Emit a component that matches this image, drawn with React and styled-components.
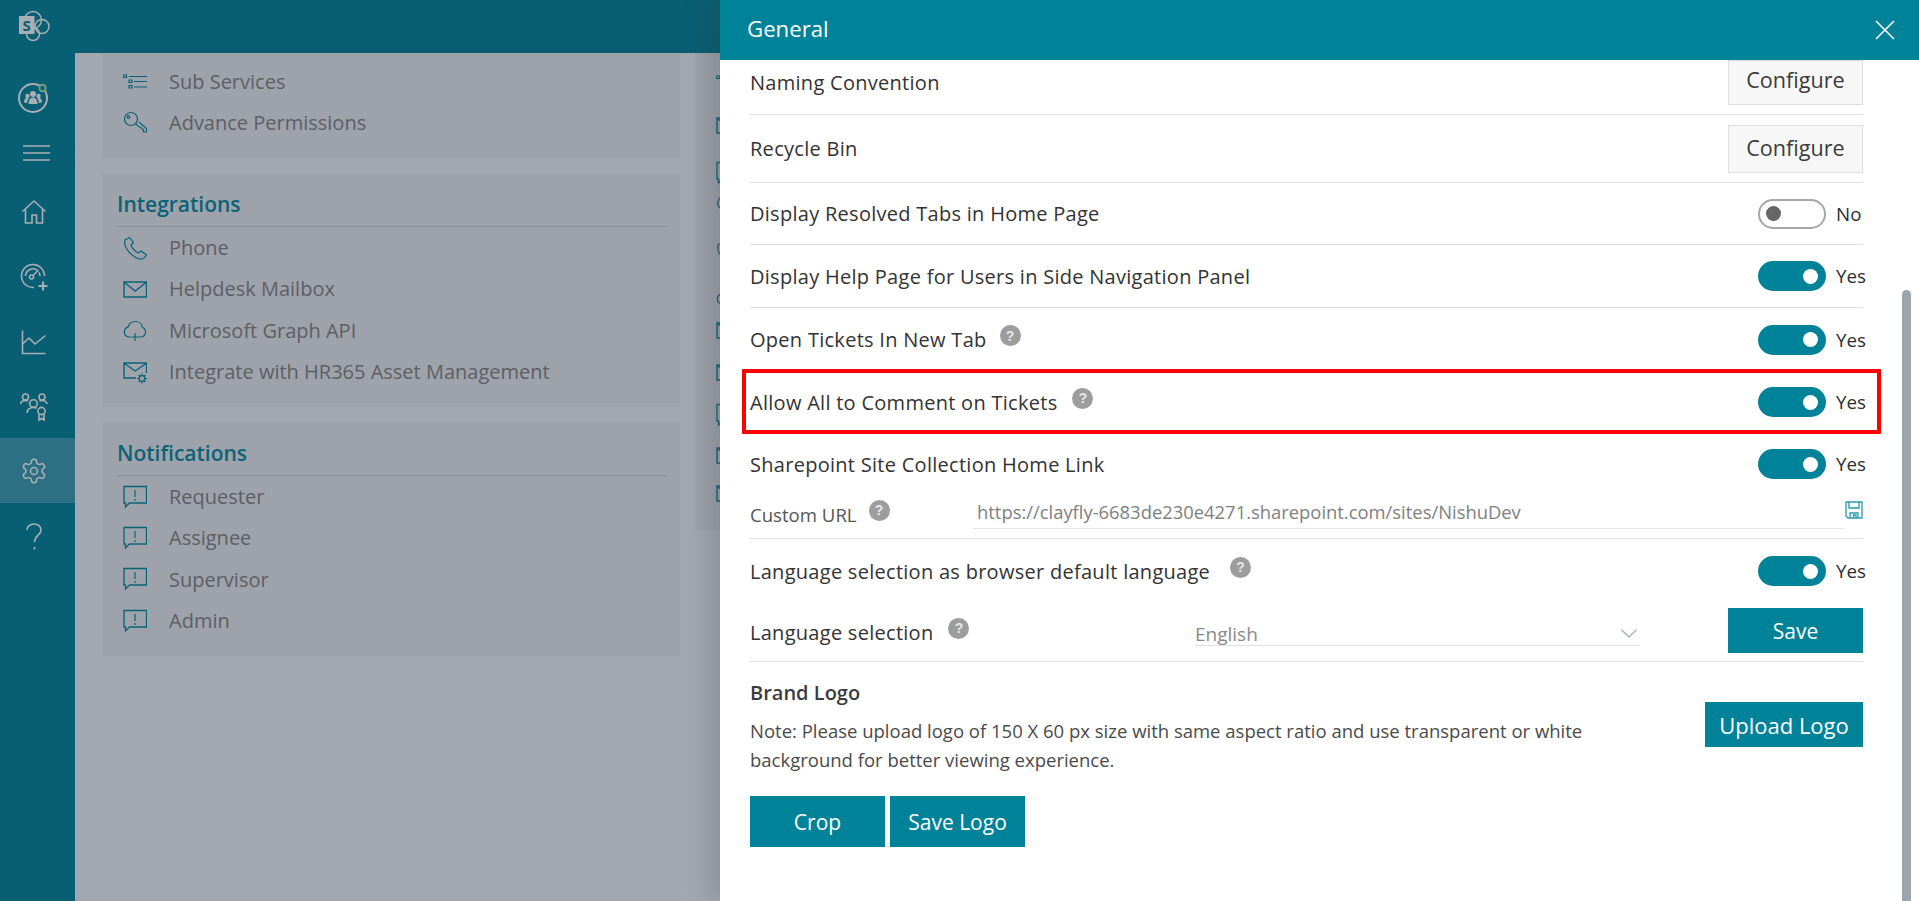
import React from "react";
import styled, { createGlobalStyle } from "styled-components";

const GlobalStyle = createGlobalStyle`
  html, body { margin: 0; padding: 0; height: 100%; overflow: hidden; }
  body { font-family: "Open Sans", "Noto Sans", sans-serif; }
`;

const Page = styled.div`
  position: relative;
  display: flex;
  width: 1919px;
  height: 901px;
  overflow: hidden;
  background: #a3a8b0;
`;

const Sidebar = styled.nav`
  width: 75px;
  flex: none;
  background: #085e72;
  display: flex;
  flex-direction: column;
`;

const SideItem = styled.div`
  height: ${(p) => p.$h}px;
  box-sizing: border-box;
  padding: 0 8px ${(p) => p.$pb || 0}px ${(p) => p.$shift || 0}px;
  display: flex;
  align-items: center;
  justify-content: center;
  color: #a9aeb5;
  background: ${(p) => (p.$active ? "#2d6f83" : "transparent")};
`;

const Main = styled.div`
  flex: 1;
  min-width: 0;
  display: flex;
  flex-direction: column;
`;

const TopBar = styled.div`
  height: 53px;
  flex: none;
  background: #085e72;
`;

const Columns = styled.div`
  flex: 1;
  display: flex;
  gap: 15px;
  padding-left: 27px;
`;

const Column = styled.div`
  width: 578px;
  flex: none;
  display: flex;
  flex-direction: column;
  gap: 15px;
`;

const Card = styled.section`
  background: #9ea2aa;
  padding: ${(p) => p.$pt}px 13px 0 15px;
  height: ${(p) => p.$h}px;
  box-sizing: border-box;
`;

const CardTitle = styled.h3`
  margin: 0;
  height: 38px;
  box-sizing: border-box;
  font-size: 21px;
  line-height: 31px;
  font-weight: 600;
  color: #0b6378;
  border-bottom: 1px solid #8d9099;
  padding-left: 0;
`;

const NavRow = styled.div`
  height: 41.3px;
  display: flex;
  align-items: center;
  gap: 22px;
  padding-left: 6px;
  font-size: 20px;
  color: #5c5f66;
  white-space: nowrap;
  svg { flex: none; }
`;

const PeekCard = styled.section`
  width: 100px;
  height: 477px;
  box-sizing: border-box;
  background: #9ea2aa;
  padding-left: 21px;
  display: flex;
  flex-direction: column;
`;

const PeekIcon = styled.div`
  height: 24px;
  margin-top: ${(p) => p.$mt}px;
`;

const PanelLayer = styled.div`
  position: absolute;
  top: 0;
  bottom: 0;
  left: 720px;
  width: 1199px;
  background: #fff;
  box-shadow: -10px 0 24px rgba(60, 64, 72, 0.24);
  display: flex;
  flex-direction: column;
`;

const PanelHeader = styled.header`
  height: 60px;
  flex: none;
  box-sizing: border-box;
  background: #008299;
  color: #fff;
  display: flex;
  align-items: center;
  justify-content: space-between;
  padding: 0 24px 4px 27px;
  font-size: 22.2px;
  svg { display: block; margin-top: 4px; }
`;

const PanelBody = styled.div`
  flex: 1;
  position: relative;
  padding: 0 56px 0 30px;
  overflow: hidden;
`;

const ScrollThumb = styled.div`
  position: absolute;
  right: 8px;
  top: 230px;
  bottom: 0;
  width: 9px;
  border-radius: 5px 5px 0 0;
  background: #9aa5ad;
`;

const Row = styled.div`
  height: ${(p) => p.$h}px;
  padding-bottom: ${(p) => p.$pb || 0}px;
  display: flex;
  align-items: center;
  justify-content: space-between;
  box-sizing: border-box;
  border-bottom: ${(p) => (p.$line ? "1px solid #e0e0e0" : "none")};
  font-size: 20px;
  letter-spacing: 0.28px;
  color: #333;
`;

const LabelWrap = styled.div`
  display: flex;
  align-items: center;
  gap: ${(p) => p.$gap || 14}px;
`;

const Help = styled.span`
  width: 21px;
  height: 21px;
  border-radius: 50%;
  background: #9d9d9d;
  color: #e8e8e8;
  font-size: 14px;
  letter-spacing: 0;
  font-weight: 700;
  display: inline-flex;
  align-items: center;
  justify-content: center;
  margin-top: -8px;
  font-family: "Liberation Sans", sans-serif;
`;

const ConfigureBtn = styled.button`
  width: 135px;
  height: ${(p) => p.$h}px;
  border: 1px solid #dedede;
  background: #f7f7f7;
  color: #3b3b3b;
  font: inherit;
  font-size: 21.6px;
  letter-spacing: 0;
  padding: 0 0 ${(p) => p.$pb || 0}px;
`;

const SwitchBox = styled.div`
  display: flex;
  align-items: center;
  gap: 10px;
  width: 107px;
  margin-right: -2px;
  font-size: 18.8px;
  letter-spacing: 0;
  color: #2e2e2e;
`;

const Track = styled.span`
  width: 68px;
  height: 30px;
  box-sizing: border-box;
  border-radius: 15px;
  flex: none;
  display: flex;
  align-items: center;
  padding: 0 ${(p) => (p.$on ? 8 : 6)}px;
  justify-content: ${(p) => (p.$on ? "flex-end" : "flex-start")};
  background: ${(p) => (p.$on ? "#008299" : "#fff")};
  border: ${(p) => (p.$on ? "none" : "2px solid #a6a6a6")};
`;

const Thumb = styled.span`
  width: 15px;
  height: 15px;
  border-radius: 50%;
  background: ${(p) => (p.$on ? "#fff" : "#666")};
`;

const UrlRow = styled.div`
  height: 44px;
  box-sizing: border-box;
  display: flex;
  align-items: flex-start;
  border-bottom: 1px solid #e0e0e0;
`;

const UrlLabel = styled.div`
  width: 223px;
  height: 38px;
  flex: none;
  display: flex;
  align-items: center;
  gap: 12px;
  font-size: 18.6px;
  color: #555;
`;

const UrlField = styled.div`
  flex: 1;
  height: 34px;
  box-sizing: border-box;
  border-bottom: 1px solid #e4e4e4;
  display: flex;
  align-items: center;
  padding-left: 4px;
  font-size: 18.4px;
  color: #808080;
`;

const SaveIconWrap = styled.div`
  margin: 6px 0 0 1px;
  line-height: 0;
`;

const SelectCluster = styled.div`
  display: flex;
  align-items: flex-start;
  gap: 88px;
  margin-bottom: 3px;
`;

const SelectField = styled.div`
  width: 445px;
  height: 30px;
  margin-top: 8px;
  padding: 6px 3px 0 0;
  border-bottom: 1px solid #e0e0e0;
  display: flex;
  align-items: center;
  justify-content: space-between;
  box-sizing: border-box;
  font-size: 19px;
  letter-spacing: 0;
  color: #888;
`;

const PrimaryBtn = styled.button`
  height: ${(p) => p.$h || 45}px;
  width: ${(p) => p.$w}px;
  border: none;
  padding: 0;
  background: #008299;
  color: #fff;
  font: inherit;
  font-size: 21px;
  letter-spacing: 0;
`;

const UploadBtn = styled(PrimaryBtn)`
  margin-top: 23px;
  font-size: 22px;
`;

const BrandBlock = styled.div`
  display: flex;
  justify-content: space-between;
  align-items: flex-start;
  padding-top: 17px;
`;

const BrandLeft = styled.div`
  width: 950px;
`;

const BrandTitle = styled.div`
  font-size: 20px;
  font-weight: 600;
  color: #3b3b3b;
  line-height: 28px;
`;

const Note = styled.p`
  margin: 9px 0 0;
  font-size: 18.5px;
  line-height: 29px;
  color: #4a4a4a;
`;

const BrandButtons = styled.div`
  display: flex;
  gap: 5px;
  margin-top: 22px;
`;

const Highlight = styled.div`
  position: absolute;
  left: 22px;
  top: 309px;
  width: 1139px;
  height: 65px;
  box-sizing: border-box;
  border: 4px solid #ff0000;
  border-radius: 1px;
  pointer-events: none;
`;

const stroke = { fill: "none", stroke: "currentColor", strokeWidth: 1.6 };

const LogoIcon = () => (
  <svg width="32" height="32" viewBox="0 0 32 32">
    <g fill="none" stroke="currentColor" strokeWidth="1.5">
      <circle cx="15" cy="10" r="8.5" />
      <circle cx="24" cy="16.500" r="7" />
      <circle cx="15" cy="24" r="6.500" />
    </g>
    <rect x="1" y="6" width="15.500" height="18" fill="currentColor" />
    <text x="8.700" y="20.500" fontSize="15" fontWeight="700" textAnchor="middle" fill="#085e72" fontFamily="Open Sans">S</text>
  </svg>
);

const AvatarIcon = () => (
  <svg width="32" height="32" viewBox="0 0 32 32">
    <circle cx="15" cy="16" r="14" fill="none" stroke="currentColor" strokeWidth="2" />
    <g fill="currentColor">
      <circle cx="15" cy="12" r="3" />
      <circle cx="9.500" cy="14" r="2.200" />
      <circle cx="20.500" cy="14" r="2.200" />
      <path d="M10.500 22c0-4 1.800-6.500 4.500-6.500s4.500 2.500 4.500 6.500z" />
      <path d="M6 20.500c0-3 1.300-4.800 3.500-4.800 .5 0 1 .1 1.300 .3-1 1.300-1.600 3-1.600 5z" />
      <path d="M24 20.500c0-3-1.300-4.800-3.500-4.800-.5 0-1 .1-1.300 .3 1 1.300 1.600 3 1.600 5z" />
    </g>
    <circle cx="24.500" cy="6" r="3.200" fill="#085e72" stroke="#6c9f78" strokeWidth="2" />
  </svg>
);

const MenuIcon = () => (
  <svg width="27" height="18" viewBox="0 0 27 18">
    <path d="M0 2h27M0 9h27M0 16h27" fill="none" stroke="currentColor" strokeWidth="1.700" />
  </svg>
);

const HomeIcon = () => (
  <svg width="26" height="26" viewBox="0 0 26 26" {...stroke}>
    <path d="M1.500 12.500 13 2l11.500 10.500M4.500 10.500V24h6.500v-8h4.500v8h6V10.500" />
  </svg>
);

const GaugeIcon = () => (
  <svg width="28" height="28" viewBox="0 0 28 28" {...stroke}>
    <path d="M14 24.500A11.500 11.500 0 1 1 24.500 13" />
    <path d="M5.500 13a7.500 7.500 0 0 1 11.500-6M19 9.500a7.500 7.500 0 0 1 1 3.500" />
    <circle cx="11.500" cy="14" r="2" />
    <path d="M13 12.500 18.500 7" />
    <path d="M23 18.500v9M18.500 23h9" strokeWidth="2" />
  </svg>
);

const ChartIcon = () => (
  <svg width="26" height="26" viewBox="0 0 26 26" {...stroke}>
    <path d="M1.500 1.500V24.500H24.500" />
    <path d="M1.500 15 8 9l6 6L24.500 6.500" />
  </svg>
);

const TeamIcon = () => (
  <svg width="28" height="28" viewBox="0 0 28 28" {...stroke}>
    <circle cx="5.500" cy="4" r="3" />
    <circle cx="22" cy="4" r="3" />
    <circle cx="13.500" cy="10.500" r="3.800" />
    <path d="M.5 11c.5-2.500 2.500-3.500 5-3.500 1 0 2 .2 2.500.7M27 11c-.5-2.500-2.500-3.500-5-3.500-1 0-2 .2-2.500.7M7 20c.3-3.500 3-5.500 6.500-5.500 1.200 0 2.200.2 3 .7" />
    <circle cx="21.500" cy="18" r="3.600" />
    <path d="M19 21v6l2.500-1.500L24 27v-6" />
  </svg>
);

const GearIcon = () => (
  <svg width="28" height="28" viewBox="0 0 24 24" {...stroke} strokeWidth="1.350">
    <path d="M12.200 2h-.44a2 2 0 0 0-2 2v.18a2 2 0 0 1-1 1.730l-.43.25a2 2 0 0 1-2 0l-.15-.08a2 2 0 0 0-2.730.73l-.22.38a2 2 0 0 0 .73 2.730l.15.1a2 2 0 0 1 1 1.720v.51a2 2 0 0 1-1 1.740l-.15.09a2 2 0 0 0-.73 2.730l.22.38a2 2 0 0 0 2.730.73l.15-.08a2 2 0 0 1 2 0l.43.25a2 2 0 0 1 1 1.730V20a2 2 0 0 0 2 2h.44a2 2 0 0 0 2-2v-.18a2 2 0 0 1 1-1.730l.43-.25a2 2 0 0 1 2 0l.15.08a2 2 0 0 0 2.730-.73l.22-.39a2 2 0 0 0-.73-2.730l-.15-.08a2 2 0 0 1-1-1.740v-.5a2 2 0 0 1 1-1.740l.15-.09a2 2 0 0 0 .73-2.730l-.22-.38a2 2 0 0 0-2.730-.73l-.15.08a2 2 0 0 1-2 0l-.43-.25a2 2 0 0 1-1-1.730V4a2 2 0 0 0-2-2z" />
    <circle cx="12" cy="12" r="3" />
  </svg>
);

const QuestionIcon = () => (
  <svg width="18" height="28" viewBox="0 0 18 28" {...stroke}>
    <path d="M2 7c0-3.500 3-6 7-6s7 2.500 7 6c0 5-6.500 5.500-6.500 12" />
    <path d="M9.500 24v2.500" />
  </svg>
);

const navIcon = { width: 24, height: 24, viewBox: "0 0 24 24", fill: "none", stroke: "#0b6378", strokeWidth: 1.2 };

const ListIcon = () => (
  <svg {...navIcon} viewBox="0 -2 24 24">
    <path d="M.5 3h3v2.500h-3zM6 8h3v2.500H6zM6 13.500h3V16H6zM6 4.500h18M11 9.500h13M11 15h13" />
  </svg>
);

const KeyIcon = () => (
  <svg {...navIcon}>
    <circle cx="8" cy="8" r="6.500" />
    <circle cx="5.500" cy="6" r="1.300" />
    <path d="m12.500 12.500 3.500 3.500 2 0 .5 2 2 .5 0 2.500h3v-3.500l-7.500-6.500" />
  </svg>
);

const PhoneIcon = () => (
  <svg {...navIcon}>
    <path d="M6.500 1.500 2 4c-1 4 1 9 5 13s8 6.500 12 6c2-.5 3.500-2 4.500-4l-5.500-4-3 2c-2.500-1-6-5-7-8l2.500-2.500z" />
  </svg>
);

const MailIcon = () => (
  <svg {...navIcon}>
    <path d="M1 5h22.500v15H1zM1.500 5.500 12.200 14 23 5.500" strokeWidth="1.400" />
  </svg>
);

const CloudIcon = () => (
  <svg {...navIcon}>
    <path d="M8 19H6a5 5 0 0 1-1-9.800C6 5.500 9 3.500 12.500 3.500c3.500 0 6.500 2.500 7 6a5 5 0 0 1-1 9.500h-3" />
    <path d="M12 15v8M8.500 19h7" />
  </svg>
);

const MailGearIcon = () => (
  <svg {...navIcon}>
    <path d="M13 18H1V3h22.500v10M1.500 3.500 12.200 11 23 3.500" strokeWidth="1.400" />
    <circle cx="19" cy="18.500" r="2.800" />
    <path d="M19 13.500v2M19 21.500v2M14 18.500h2M22 18.500h2M15.500 15l1.500 1.500M21 20.500l1.500 1.500M15.500 22l1.500-1.500M21 16.500l1.500-1.500" />
  </svg>
);

const AlertIcon = () => (
  <svg {...navIcon}>
    <path d="M1 1.500h22.500V18H6.500L2.500 22V18H1z" strokeWidth="1.300" />
    <path d="M12 5v7M12 14v2" />
  </svg>
);

const FloppyIcon = () => (
  <svg width="18" height="18" viewBox="0 0 18 18" fill="none" stroke="#2a9ab0" strokeWidth="1.300">
    <path d="M1 1h16v16H3l-2-2zM4 1v6h10V1M5 17v-5h8v5M8.500 17v-3h2.500v3" />
  </svg>
);

const CloseIcon = () => (
  <svg width="20" height="20" viewBox="0 0 20 20" fill="none" stroke="#fff" strokeWidth="1.600">
    <path d="M1 1l18 18M19 1 1 19" />
  </svg>
);

const ChevronIcon = () => (
  <svg width="16" height="9" viewBox="0 0 16 9" fill="none" stroke="#aab0b5" strokeWidth="1.300">
    <path d="M.5 .8 8 8l7.500-7.200" />
  </svg>
);

const Switch = ({ on }) => (
  <SwitchBox>
    <Track $on={on}>
      <Thumb $on={on} />
    </Track>
    {on ? "Yes" : "No"}
  </SwitchBox>
);

// second column sits behind the panel, only the icon edges show
const peekIcons = [
  [18, ListIcon],
  [18, MailIcon],
  [24, AlertIcon],
  [10, KeyIcon],
  [22, PhoneIcon],
  [20, CloudIcon],
  [9, MailIcon],
  [18, MailIcon],
  [19, AlertIcon],
  [16, MailIcon],
  [14, MailIcon],
];

export default function App() {
  return (
    <>
      <GlobalStyle />
      <Page>
        <Sidebar>
          <SideItem $h={68} $pb={16}><LogoIcon /></SideItem>
          <SideItem $h={60}><AvatarIcon /></SideItem>
          <SideItem $h={50} $shift={5}><MenuIcon /></SideItem>
          <SideItem $h={68}><HomeIcon /></SideItem>
          <SideItem $h={62}><GaugeIcon /></SideItem>
          <SideItem $h={68}><ChartIcon /></SideItem>
          <SideItem $h={62}><TeamIcon /></SideItem>
          <SideItem $h={65} $active><GearIcon /></SideItem>
          <SideItem $h={68}><QuestionIcon /></SideItem>
        </Sidebar>
        <Main>
          <TopBar />
          <Columns>
            <Column>
              <Card $pt={8} $h={105}>
                <NavRow><ListIcon />Sub Services</NavRow>
                <NavRow><KeyIcon />Advance Permissions</NavRow>
              </Card>
              <Card $pt={16} $h={234}>
                <CardTitle>Integrations</CardTitle>
                <NavRow><PhoneIcon />Phone</NavRow>
                <NavRow><MailIcon />Helpdesk Mailbox</NavRow>
                <NavRow><CloudIcon />Microsoft Graph API</NavRow>
                <NavRow><MailGearIcon />Integrate with HR365 Asset Management</NavRow>
              </Card>
              <Card $pt={16} $h={234}>
                <CardTitle>Notifications</CardTitle>
                <NavRow><AlertIcon />Requester</NavRow>
                <NavRow><AlertIcon />Assignee</NavRow>
                <NavRow><AlertIcon />Supervisor</NavRow>
                <NavRow><AlertIcon />Admin</NavRow>
              </Card>
            </Column>
            <PeekCard>
              {peekIcons.map(([mt, Icon], i) => (
                <PeekIcon key={i} $mt={mt}><Icon /></PeekIcon>
              ))}
            </PeekCard>
          </Columns>
        </Main>
        <PanelLayer>
          <PanelHeader>
            General
            <CloseIcon />
          </PanelHeader>
          <PanelBody>
            <Row $h={55} $pb={9} $line>
              Naming Convention
              <ConfigureBtn $h={45} $pb={6}>Configure</ConfigureBtn>
            </Row>
            <Row $h={68} $line>
              Recycle Bin
              <ConfigureBtn $h={48} $pb={2}>Configure</ConfigureBtn>
            </Row>
            <Row $h={62} $line>
              Display Resolved Tabs in Home Page
              <Switch />
            </Row>
            <Row $h={63} $line>
              Display Help Page for Users in Side Navigation Panel
              <Switch on />
            </Row>
            <Row $h={63}>
              <LabelWrap $gap={13}>Open Tickets In New Tab<Help>?</Help></LabelWrap>
              <Switch on />
            </Row>
            <Row $h={62}>
              <LabelWrap $gap={15}>Allow All to Comment on Tickets<Help>?</Help></LabelWrap>
              <Switch on />
            </Row>
            <Row $h={62}>
              Sharepoint Site Collection Home Link
              <Switch on />
            </Row>
            <UrlRow>
              <UrlLabel>Custom URL<Help>?</Help></UrlLabel>
              <UrlField>https://clayfly-6683de230e4271.sharepoint.com/sites/NishuDev</UrlField>
              <SaveIconWrap><FloppyIcon /></SaveIconWrap>
            </UrlRow>
            <Row $h={64}>
              <LabelWrap $gap={20}>Language selection as browser default language<Help>?</Help></LabelWrap>
              <Switch on />
            </Row>
            <Row $h={59} $line>
              <LabelWrap $gap={15}>Language selection<Help>?</Help></LabelWrap>
              <SelectCluster>
                <SelectField>
                  English
                  <ChevronIcon />
                </SelectField>
                <PrimaryBtn $w={135}>Save</PrimaryBtn>
              </SelectCluster>
            </Row>
            <BrandBlock>
              <BrandLeft>
                <BrandTitle>Brand Logo</BrandTitle>
                <Note>
                  Note: Please upload logo of 150 X 60 px size with same aspect ratio and use transparent or white<br />
                  background for better viewing experience.
                </Note>
                <BrandButtons>
                  <PrimaryBtn $w={135} $h={51}>Crop</PrimaryBtn>
                  <PrimaryBtn $w={135} $h={51}>Save Logo</PrimaryBtn>
                </BrandButtons>
              </BrandLeft>
              <UploadBtn $w={158}>Upload Logo</UploadBtn>
            </BrandBlock>
            <Highlight />
            <ScrollThumb />
          </PanelBody>
        </PanelLayer>
      </Page>
    </>
  );
}
